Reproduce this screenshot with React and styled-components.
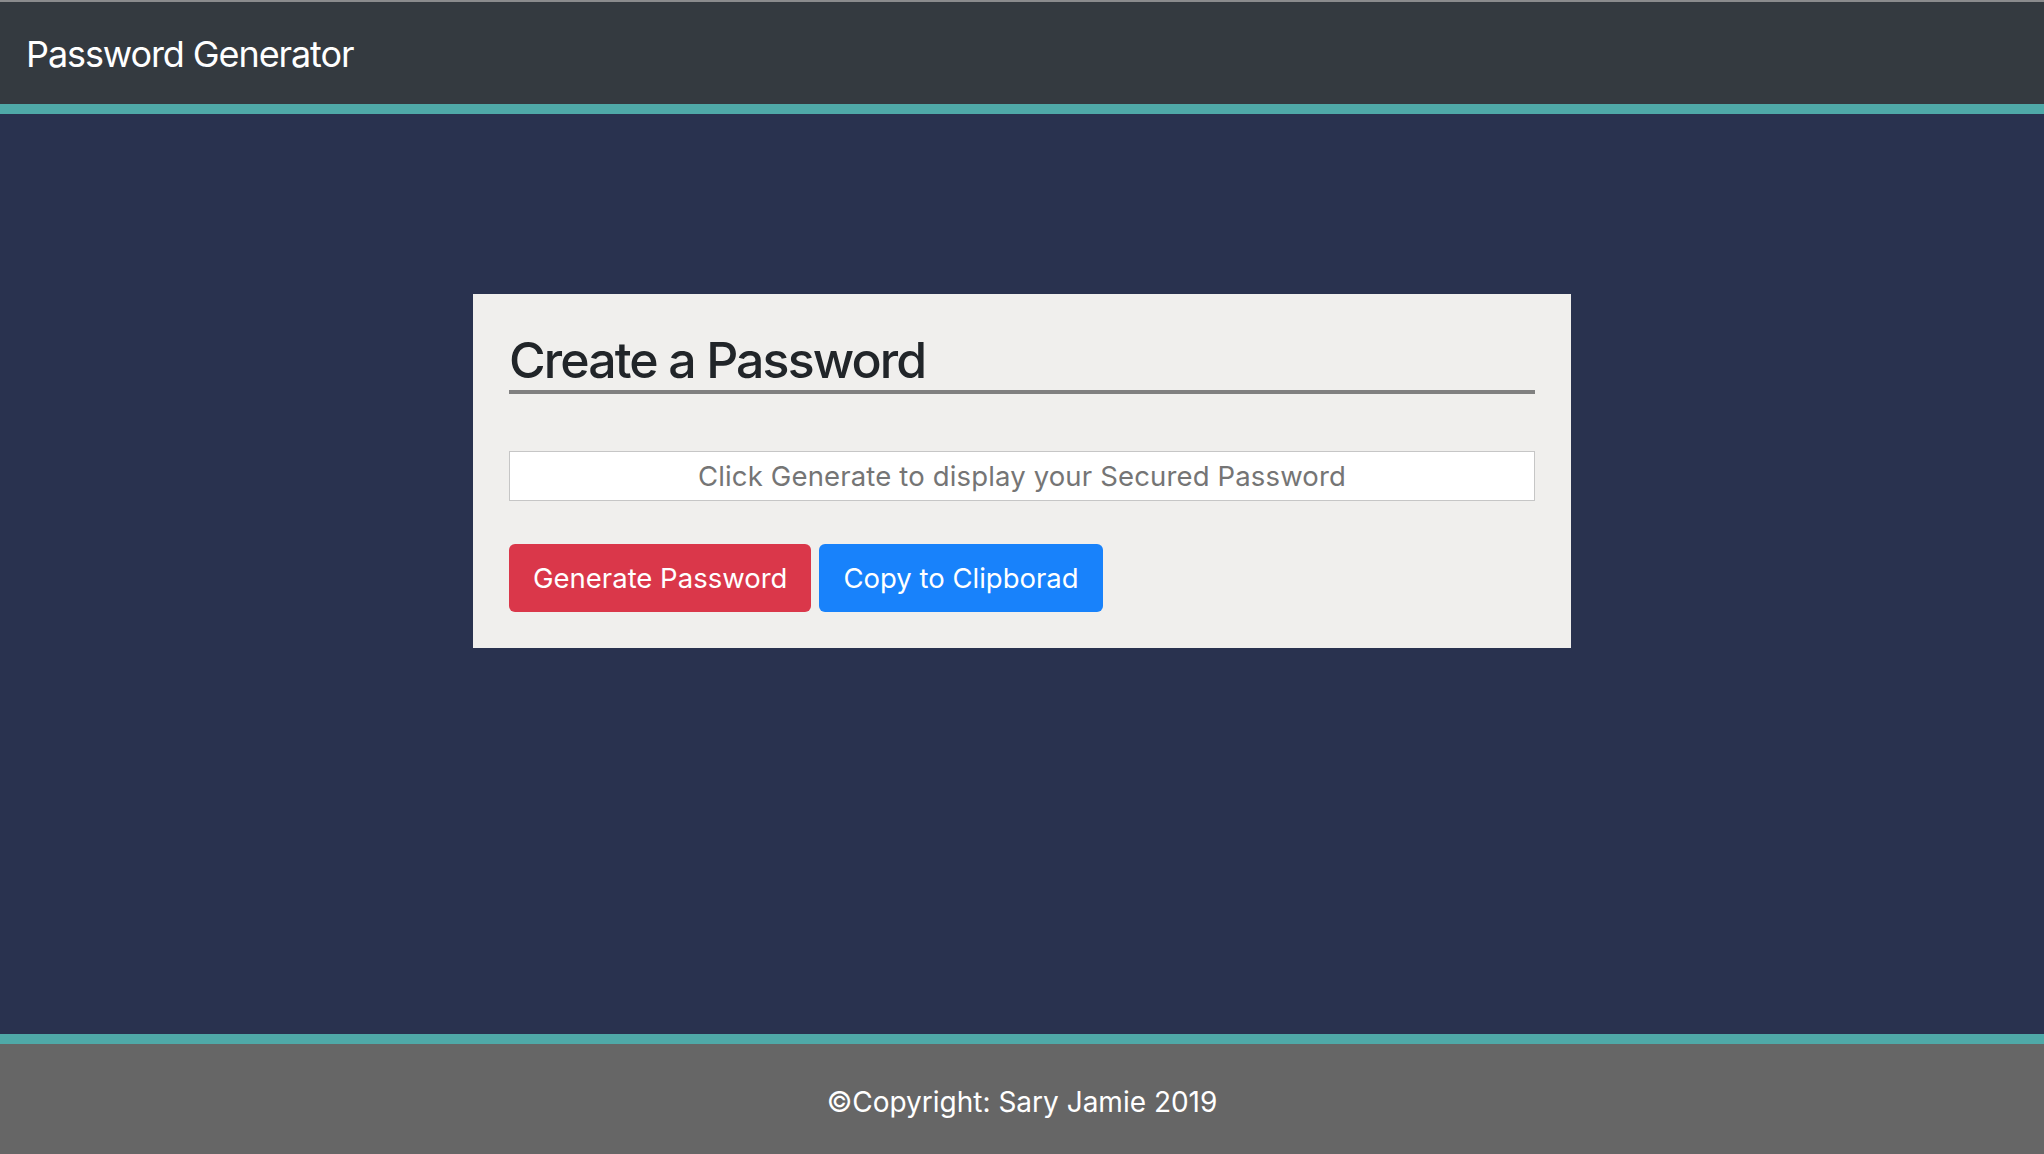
import React, { useState } from 'react';
import styled, { createGlobalStyle } from 'styled-components';

const GlobalStyle = createGlobalStyle`
  html, body {
    margin: 0;
    padding: 0;
    height: 100%;
  }
  body {
    font-family: Inter, "Noto Sans", "Liberation Sans", sans-serif;
    background: #29324f;
  }
  #root {
    min-height: 100vh;
  }
  * {
    box-sizing: border-box;
  }
`;

const Page = styled.div`
  min-height: 100vh;
  display: flex;
  flex-direction: column;
`;

const Navbar = styled.header`
  height: 114px;
  background: #343a40;
  border-top: 2px solid #8a8b8d;
  border-bottom: 10px solid #4fa9a8;
  display: flex;
  align-items: center;
  padding: 3px 26px 0;
`;

const Brand = styled.div`
  color: #ffffff;
  font-size: 36px;
  line-height: 1.2;
  font-weight: 400;
  letter-spacing: -1.1px;
`;

const Main = styled.main`
  flex: 1;
  display: flex;
  justify-content: center;
  align-items: flex-start;
  padding-top: 180px;
`;

const Card = styled.section`
  width: 1098px;
  background: #f0efed;
  padding: 36px 36px 36px 36px;
`;

const Heading = styled.h1`
  margin: 0;
  font-size: 50px;
  line-height: 60px;
  font-weight: 500;
  letter-spacing: -1.9px;
  color: #212529;
  border-bottom: 4px solid #808080;
`;

const PasswordField = styled.input`
  display: block;
  width: 100%;
  height: 50px;
  margin-top: 57px;
  border: 1px solid #c6c6c6;
  background: #ffffff;
  font-family: inherit;
  font-size: 27.5px;
  letter-spacing: 0.15px;
  color: #555;
  text-align: center;
  outline: none;

  &::placeholder {
    color: #757575;
  }
`;

const ButtonRow = styled.div`
  display: flex;
  gap: 8px;
  margin-top: 43px;
`;

const Button = styled.button`
  height: 68px;
  padding: 0 24px;
  border: none;
  border-radius: 6px;
  font-family: inherit;
  font-size: 27.5px;
  line-height: 41px;
  color: #ffffff;
  background: ${props => (props.variant === 'danger' ? '#da374a' : '#1882fb')};
  cursor: pointer;
`;

const Footer = styled.footer`
  height: 120px;
  background: #666666;
  border-top: 10px solid #4fa9a8;
  display: flex;
  justify-content: center;
  padding-top: 37px;
`;

const FooterText = styled.div`
  color: #ffffff;
  font-size: 28px;
  line-height: 42px;
`;

const chars = 'ABCDEFGHIJKLMNOPQRSTUVWXYZabcdefghijklmnopqrstuvwxyz0123456789!@#$%^&*';

const App = () => {
  const [password, setPassword] = useState('');

  const generate = () => {
    let out = '';
    for (let i = 0; i < 16; i++) {
      out += chars[Math.floor(Math.random() * chars.length)];
    }
    setPassword(out);
  };

  const copy = () => {
    if (password && navigator.clipboard) {
      navigator.clipboard.writeText(password).catch(() => {});
    }
  };

  return (
    <Page>
      <GlobalStyle />
      <Navbar>
        <Brand>Password Generator</Brand>
      </Navbar>
      <Main>
        <Card>
          <Heading>Create a Password</Heading>
          <PasswordField
            readOnly
            value={password}
            placeholder="Click Generate to display your Secured Password"
          />
          <ButtonRow>
            <Button variant="danger" onClick={generate}>Generate Password</Button>
            <Button variant="primary" onClick={copy}>Copy to Clipborad</Button>
          </ButtonRow>
        </Card>
      </Main>
      <Footer>
        <FooterText>©Copyright: Sary Jamie 2019</FooterText>
      </Footer>
    </Page>
  );
};

export default App;
